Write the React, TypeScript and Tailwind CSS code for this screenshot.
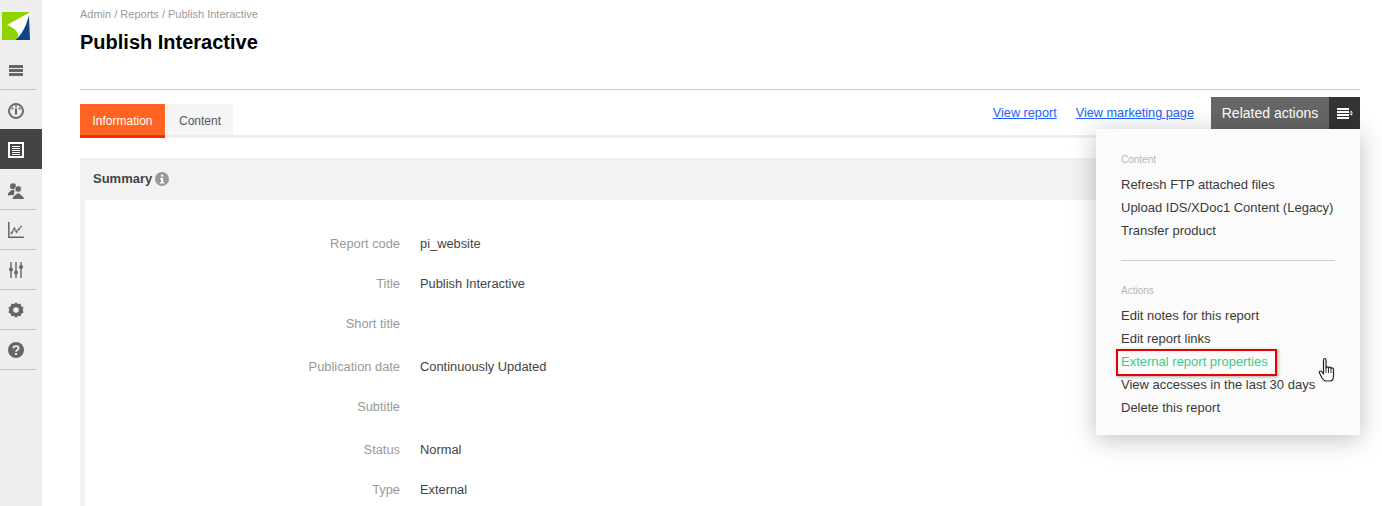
import React from "react";

const F = "font-['Liberation_Sans',Arial,sans-serif]";

const rows: { label: string; value?: string; cls: string }[] = [
  { label: "Report code", value: "pi_website", cls: "mb-[20px]" },
  { label: "Title", value: "Publish Interactive", cls: "mb-[20px]" },
  { label: "Short title", cls: "mb-[23px]" },
  { label: "Publication date", value: "Continuously Updated", cls: "mb-[20px]" },
  { label: "Subtitle", cls: "mb-[23px]" },
  { label: "Status", value: "Normal", cls: "mb-[20px]" },
  { label: "Type", value: "External", cls: "mb-[20px]" },
];

function Logo() {
  return (
    <svg width="28" height="28" viewBox="0 0 28 28" className="block">
      <rect width="28" height="28" fill="#8fd400" />
      <path d="M28 0 L28 28 L13 28 C16 26 17 23 15 20 C12 16 8 14 5 13 C12 9 22 4 28 0Z" fill="#fff" />
      <path d="M27 3 L28 28 L13 28 C19 24 24 15 27 3Z" fill="#0f4585" />
    </svg>
  );
}

function SideItem({ children, active, line = true }: { children: React.ReactNode; active?: boolean; line?: boolean }) {
  return (
    <div className={`relative flex h-[40px] w-[42px] items-center justify-center pr-[10px] pt-[2px] ${active ? "bg-[#444444]" : ""}`}>
      {children}
      {line && !active && <div className="absolute bottom-[-1px] left-0 h-px w-[36px] bg-[#c4c4c4]" />}
    </div>
  );
}

function Sidebar() {
  return (
    <div className="flex h-[506px] w-[42px] shrink-0 flex-col bg-[#eeeeee]">
      <div className="pl-[2px] pt-[12px]"><Logo /></div>
      <div className="mt-[9px]">
        <SideItem>
          <svg width="14" height="11" viewBox="0 0 14 11" fill="#666"><rect width="14" height="3" /><rect y="4" width="14" height="3" /><rect y="8" width="14" height="3" /></svg>
        </SideItem>
        <SideItem line={false}>
          <svg width="16" height="16" viewBox="0 0 16 16" fill="none" className="mt-[2px]">
            <circle cx="8" cy="8" r="7" stroke="#666" strokeWidth="1.9" />
            <rect x="7" y="5.5" width="2" height="6" fill="#666" />
            <circle cx="8" cy="3.6" r="1" fill="#666" />
            <circle cx="4.4" cy="5.5" r="1.1" fill="#666" />
            <circle cx="11.6" cy="5.5" r="1.1" fill="#666" />
          </svg>
        </SideItem>
        <SideItem active>
          <svg width="16" height="16" viewBox="0 0 16 16" fill="none">
            <rect x="1" y="1" width="14" height="14" stroke="#fff" strokeWidth="2" />
            <path d="M4 4.5h8M4 6.5h8M4 8.5h8M4 10.5h8M4 12.5h8" stroke="#fff" strokeWidth="1" />
          </svg>
        </SideItem>
        <SideItem>
          <svg width="16" height="16" viewBox="0 0 16 16" fill="#666" className="mt-[2px]">
            <circle cx="5" cy="3.2" r="3" />
            <path d="M0 11.5 C0 9 2.5 8.5 3.5 7 L6.5 7 L6 12 L0 12.5Z" />
            <circle cx="10.2" cy="6" r="3.2" stroke="#eee" strokeWidth="0.7" />
            <path d="M4.5 16 C4.5 13 8 12.5 8.8 10.5 L11.7 10.5 C12.5 12.5 16 13 16 16Z" />
          </svg>
        </SideItem>
        <SideItem>
          <svg width="16" height="16" viewBox="0 0 16 16" fill="none" stroke="#666">
            <path d="M0.8 0V15.2H16" strokeWidth="1.5" />
            <path d="M3 12 L6.5 6.5 L8.5 10 L13.5 4" strokeWidth="1.7" strokeDasharray="3.5 0.7" />
          </svg>
        </SideItem>
        <SideItem>
          <svg width="14" height="16" viewBox="0 0 14 16" fill="#666">
            <rect x="1.3" y="0" width="1.4" height="16" />
            <rect x="6.3" y="0" width="1.4" height="16" />
            <rect x="11.3" y="0" width="1.4" height="16" />
            <circle cx="2" cy="7.5" r="2" />
            <circle cx="7" cy="10.5" r="2" />
            <circle cx="12" cy="5" r="2" />
          </svg>
        </SideItem>
        <SideItem>
          <svg width="16" height="16" viewBox="0 0 16 16">
            <path fill="#666" d="M8 0.3 L10 2 L12.6 1.7 L13.3 4.2 L15.6 5.5 L14.6 8 L15.6 10.5 L13.3 11.8 L12.6 14.3 L10 14 L8 15.7 L6 14 L3.4 14.3 L2.7 11.8 L0.4 10.5 L1.4 8 L0.4 5.5 L2.7 4.2 L3.4 1.7 L6 2Z" />
            <circle cx="8" cy="8" r="2.8" fill="#eee" />
          </svg>
        </SideItem>
        <SideItem>
          <svg width="16" height="16" viewBox="0 0 16 16">
            <circle cx="8" cy="8" r="8" fill="#666" />
            <path d="M5.4 6.2 C5.4 3.4 10.6 3.4 10.6 6.2 C10.6 8 8 8 8 9.8" fill="none" stroke="#eee" strokeWidth="1.9" />
            <rect x="7" y="11" width="2" height="2" fill="#eee" />
          </svg>
        </SideItem>
      </div>
    </div>
  );
}

function MenuLink({ children, green }: { children: React.ReactNode; green?: boolean }) {
  return <div className={`h-[23px] text-[13px] leading-[23px] ${green ? "text-[#3fcb85]" : "text-[#3a3a3a]"}`}>{children}</div>;
}

function Menu() {
  return (
    <div className="absolute left-[1096px] top-[129px] h-[306px] w-[264px] bg-[#fbfbfb] px-[25px] pt-[25px] shadow-[0_4px_24px_rgba(0,0,0,0.25)]">
      <div className="h-[12px] text-[10px] leading-[12px] text-[#b5b5b5]">Content</div>
      <div className="mt-[7px]">
        <MenuLink>Refresh FTP attached files</MenuLink>
        <MenuLink>Upload IDS/XDoc1 Content (Legacy)</MenuLink>
        <MenuLink>Transfer product</MenuLink>
      </div>
      <div className="mt-[18px] h-px w-[214px] bg-[#cfcfcf]" />
      <div className="mt-[24px] h-[12px] text-[10px] leading-[12px] text-[#b5b5b5]">Actions</div>
      <div className="mt-[7px]">
        <MenuLink>Edit notes for this report</MenuLink>
        <MenuLink>Edit report links</MenuLink>
        <MenuLink green>External report properties</MenuLink>
        <MenuLink>View accesses in the last 30 days</MenuLink>
        <MenuLink>Delete this report</MenuLink>
      </div>
    </div>
  );
}

export default function App() {
  return (
    <div className={`relative flex h-[506px] w-[1382px] overflow-hidden bg-white ${F}`}>
      <Sidebar />
      <div className="ml-[38px] w-[1280px] shrink-0">
        <div className="pt-[8px] text-[11px] leading-[13px] text-[#999999]">Admin / Reports / Publish Interactive</div>
        <h1 className="mt-[9px] text-[20px] font-bold leading-[24px] text-black">Publish Interactive</h1>
        <div className="mt-[35px] h-px bg-[#cccccc]" />
        <div className="relative h-[48px]">
          <div className="absolute left-0 right-0 top-[45px] h-[3px] bg-[#eeeeee]" />
          <div className="absolute left-0 top-[14px] flex">
            <div className="h-[34px] w-[85px] border-b-[3px] border-[#ff2a00] bg-[#ff6422] text-center text-[12px] leading-[34px] text-white">Information</div>
            <div className="ml-px h-[31px] w-[67px] bg-[#f5f5f5] pl-px text-center text-[12px] leading-[34px] text-[#555555]">Content</div>
          </div>
          <div className="flex h-[39px] items-start justify-end pt-[7px]">
            <a className="mt-[9px] text-[12.7px] leading-[14px] text-[#2261ff] underline">View report</a>
            <a className="ml-[19px] mt-[9px] text-[12.7px] leading-[14px] text-[#2261ff] underline">View marketing page</a>
            <div className="ml-[17px] flex h-[32px] w-[118px] items-center justify-center bg-[#666666] text-[14px] text-white">Related actions</div>
            <div className="flex h-[32px] w-[31px] items-center justify-center bg-[#333333]">
              <svg width="16" height="11" viewBox="0 0 16 11" fill="#fff">
                <rect width="12" height="2" />
                <rect y="3" width="12" height="2" />
                <rect y="6" width="12" height="2" />
                <rect y="9" width="12" height="2" />
                <path d="M12.6 4.6 L14.3 2.8 L16 4.6Z M12.6 5.6 L16 5.6 L14.3 7.4Z" />
              </svg>
            </div>
          </div>
        </div>
        <div className="mt-[20px] w-[1275px] bg-[#f2f2f2] pb-[10px] pl-[5px]">
          <div className="flex h-[42px] items-center pl-[8px] text-[13px] font-bold text-[#444444]">
            Summary
            <svg width="14" height="14" viewBox="0 0 14 14" className="ml-[3px]">
              <circle cx="7" cy="7" r="7" fill="#999" />
              <rect x="6" y="2.6" width="2.2" height="2" fill="#fff" />
              <path d="M5 6h3.2v4.2H9.4v1.2H4.8v-1.2H6V7.2H5Z" fill="#fff" />
            </svg>
          </div>
          <div className="h-[400px] bg-white pt-[34px]">
            {rows.map((r) => (
              <div key={r.label} className={`flex h-[20px] text-[12.85px] leading-[20px] ${r.cls}`}>
                <div className="w-[315px] text-right text-[#999999]">{r.label}</div>
                <div className="ml-[20px] text-[#444444]">{r.value}</div>
              </div>
            ))}
          </div>
        </div>
      </div>
      <Menu />
      <div className="absolute left-[1116px] top-[349px] h-[27px] w-[161px] border-[2px] border-[#e60000] shadow-[1px_1px_3px_rgba(0,0,0,0.35)]" />
      <svg className="absolute left-[1318px] top-[357px]" width="20" height="26" viewBox="0 0 20 26">
        <path d="M5.5 3 C5.5 1 8 1 8 3 V11 C8 9.5 10.5 9.5 10.5 11 C10.5 9.8 13 9.8 13 11.5 C13 10.5 15.5 10.5 15.5 12.5 V19 C15.5 22 14 24 12 24 H8 C6 24 5 22.5 4 21 L1.5 16 C0.7 14.5 2.5 13 4 15 L5.5 17Z" fill="#fff" stroke="#222" strokeWidth="1.2" strokeLinejoin="round" />
        <path d="M8 11V16M10.5 11V16M13 11.5V16" stroke="#222" strokeWidth="0.9" />
      </svg>
    </div>
  );
}
